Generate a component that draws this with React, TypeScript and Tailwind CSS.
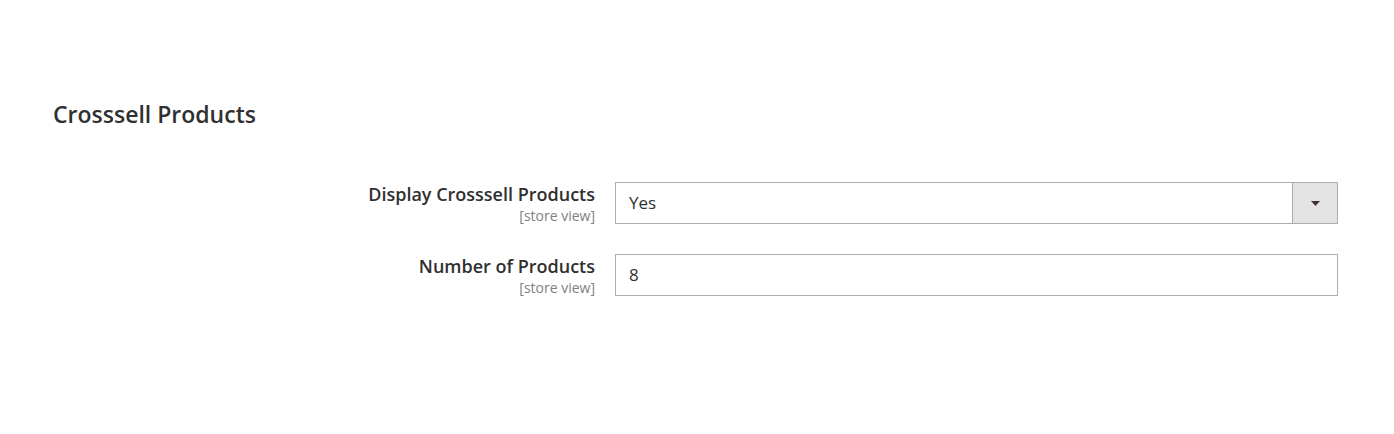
import React from 'react';

const fields = [
  { label: 'Display Crosssell Products', scope: '[store view]', value: 'Yes', type: 'select' },
  { label: 'Number of Products', scope: '[store view]', value: '8', type: 'input' },
];

const App: React.FC = () => {
  return (
    <div
      className="w-[1394px] h-[434px] bg-white text-[#303030] pl-[53px] pr-[56px] pt-[100px]"
      style={{ fontFamily: '"Open Sans", "Noto Sans", sans-serif' }}
    >
      <h2 className="text-[23px] leading-[28px] font-semibold text-[#303030]">Crosssell Products</h2>

      <div className="mt-[54px] flex flex-col gap-[30px]">
        {fields.map((field) => (
          <div key={field.label} className="flex items-start">
            <div className="w-[542px] text-right pt-[2px]">
              <div className="text-[18px] leading-[20px] font-semibold text-[#303030]">{field.label}</div>
              <div className="mt-[4px] text-[14px] leading-[16px] text-[#808080]">{field.scope}</div>
            </div>
            <div className="ml-[20px] flex-1">
              {field.type === 'select' ? (
                <div className="flex h-[42px] border border-[#adadad] bg-white">
                  <div className="flex-1 flex items-center pl-[13px] text-[17px] text-[#303030]">{field.value}</div>
                  <div className="w-[45px] flex items-center justify-center bg-[#e3e3e3] border-l border-[#adadad]">
                    <svg width="9" height="5" viewBox="0 0 9 5">
                      <path d="M0 0 L9 0 L4.5 5 Z" fill="#41362f" />
                    </svg>
                  </div>
                </div>
              ) : (
                <div className="flex items-center h-[42px] border border-[#adadad] bg-white pl-[13px] text-[17px] text-[#303030]">
                  {field.value}
                </div>
              )}
            </div>
          </div>
        ))}
      </div>
    </div>
  );
};

export default App;
